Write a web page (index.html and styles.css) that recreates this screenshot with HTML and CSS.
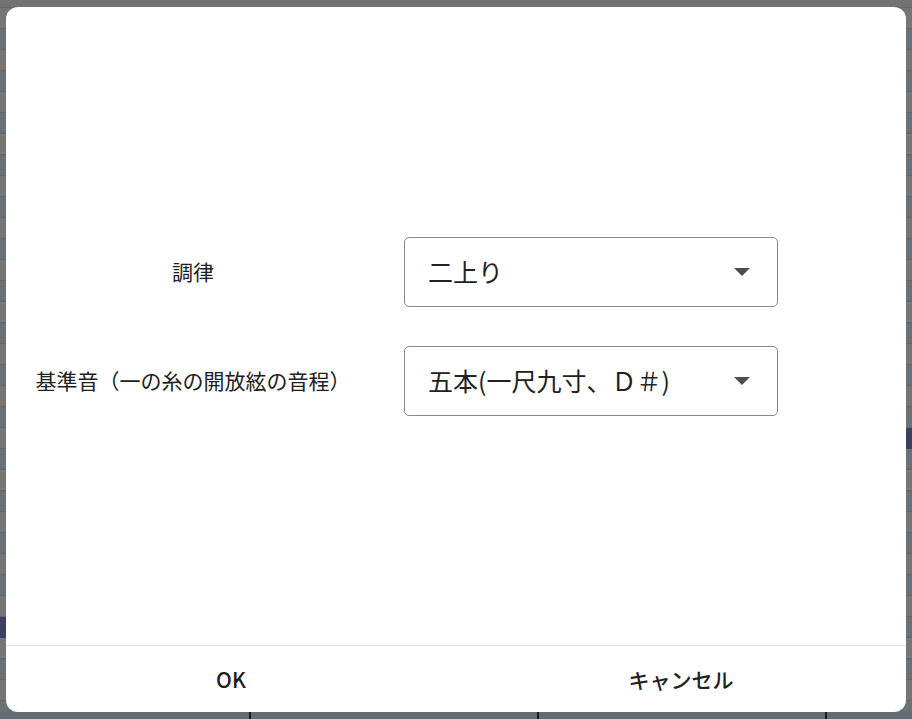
FILE: index.html
```html
<!DOCTYPE html>
<html lang="ja">
<head>
<meta charset="utf-8">
<title>調律設定</title>
<link rel="stylesheet" href="styles.css">
</head>
<body>
<div class="dialog">
  <div class="content">
    <div class="form">
      <div class="label">調律</div>
      <div class="select">
        <span class="value">二上り</span>
        <svg class="arrow" width="16" height="8" viewBox="0 0 16 8"><path d="M0 0 L16 0 L8 8 Z" fill="#4d4d4d"/></svg>
      </div>
      <div class="label">基準音（一の糸の開放絃の音程）</div>
      <div class="select">
        <span class="value">五本(一尺九寸、Ｄ＃)</span>
        <svg class="arrow" width="16" height="8" viewBox="0 0 16 8"><path d="M0 0 L16 0 L8 8 Z" fill="#4d4d4d"/></svg>
      </div>
    </div>
  </div>
  <div class="footer">
    <button class="btn">OK</button>
    <button class="btn">キャンセル</button>
  </div>
</div>
</body>
</html>
```

FILE: styles.css
```css
html, body {
  margin: 0;
  height: 100%;
}
body {
  display: flex;
  align-items: center;
  justify-content: center;
  font-family: "Noto Sans CJK JP", "Noto Sans", sans-serif;
  color: #212121;
  background:
    linear-gradient(#3c3f60, #3c3f60) 0 617px / 6px 21px no-repeat,
    linear-gradient(#3c3f60, #3c3f60) 100% 428px / 6px 21px no-repeat,
    linear-gradient(#737373, #737373) 0 0 / 100% 7px no-repeat,
    linear-gradient(90deg, transparent 249px, #1e1e1e 249px 251px, transparent 251px 537px, #1e1e1e 537px 539px, transparent 539px 825px, #1e1e1e 825px 827px, transparent 827px) 0 100% / 100% 7px no-repeat,
    linear-gradient(#666c72, #666c72) 0 100% / 100% 7px no-repeat,
    linear-gradient(to bottom, #687078 0 20px, #60686f 20px 21px, #767676 21px 41px, #60686f 41px 42px) 0 113px / 100% 42px repeat;
}
.dialog {
  width: 900px;
  height: 705px;
  background: #fff;
  border-radius: 12px;
  display: flex;
  flex-direction: column;
  overflow: hidden;
}
.content {
  flex: 1;
  display: flex;
  align-items: center;
}
.form {
  display: grid;
  grid-template-columns: 374px 374px;
  column-gap: 24px;
  row-gap: 39px;
  align-items: center;
}
.label {
  justify-self: center;
  font-size: 21px;
  line-height: 1.4;
}
.select {
  height: 70px;
  box-sizing: border-box;
  border: 1px solid #8a8a8a;
  border-radius: 5px;
  display: flex;
  align-items: center;
  justify-content: space-between;
  padding: 0 27px 0 23px;
}
.value {
  font-size: 25px;
  line-height: 1.4;
}
.arrow {
  display: block;
}
.footer {
  height: 66px;
  border-top: 1px solid #e3e3e3;
  display: flex;
}
.btn {
  flex: 1;
  border: 0;
  background: transparent;
  font-family: "Noto Sans CJK JP", "Noto Sans", sans-serif;
  font-size: 21px;
  font-weight: 500;
  color: #212121;
  padding: 0;
  cursor: pointer;
}
```
